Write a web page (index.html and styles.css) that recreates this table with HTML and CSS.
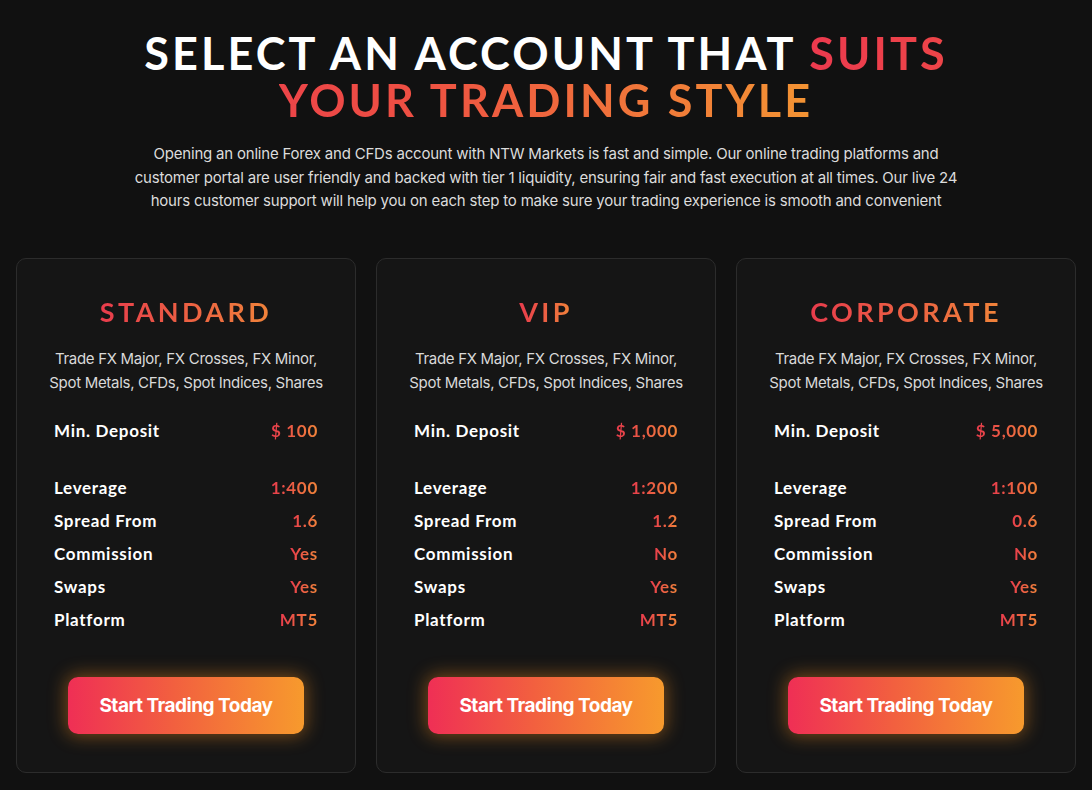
FILE: index.html
```html
<!DOCTYPE html>
<html lang="en">
<head>
<meta charset="utf-8">
<title>Select an account</title>
<link rel="stylesheet" href="styles.css">
</head>
<body>
<section class="accounts">
  <header class="intro">
    <h1 class="headline">SELECT AN ACCOUNT THAT <span class="accent">SUITS<br>YOUR TRADING STYLE</span></h1>
    <p class="lead">Opening an online Forex and CFDs account with NTW Markets is fast and simple. Our online trading platforms and customer portal are user friendly and backed with tier 1 liquidity, ensuring fair and fast execution at all times. Our live 24 hours customer support will help you on each step to make sure your trading experience is smooth and convenient</p>
  </header>
  <div class="cards">
    <article class="card">
      <h2 class="card-title"><span class="grad">STANDARD</span></h2>
      <p class="card-desc">Trade FX Major, FX Crosses, FX Minor,<br>Spot Metals, CFDs, Spot Indices, Shares</p>
      <dl class="specs">
        <div class="row first"><dt>Min. Deposit</dt><dd><span class="grad">$ 100</span></dd></div>
        <div class="row"><dt>Leverage</dt><dd><span class="grad">1:400</span></dd></div>
        <div class="row"><dt>Spread From</dt><dd><span class="grad">1.6</span></dd></div>
        <div class="row"><dt>Commission</dt><dd><span class="grad">Yes</span></dd></div>
        <div class="row"><dt>Swaps</dt><dd><span class="grad">Yes</span></dd></div>
        <div class="row"><dt>Platform</dt><dd><span class="grad">MT5</span></dd></div>
      </dl>
      <a class="btn" href="#">Start Trading Today</a>
    </article>
    <article class="card">
      <h2 class="card-title"><span class="grad">VIP</span></h2>
      <p class="card-desc">Trade FX Major, FX Crosses, FX Minor,<br>Spot Metals, CFDs, Spot Indices, Shares</p>
      <dl class="specs">
        <div class="row first"><dt>Min. Deposit</dt><dd><span class="grad">$ 1,000</span></dd></div>
        <div class="row"><dt>Leverage</dt><dd><span class="grad">1:200</span></dd></div>
        <div class="row"><dt>Spread From</dt><dd><span class="grad">1.2</span></dd></div>
        <div class="row"><dt>Commission</dt><dd><span class="grad">No</span></dd></div>
        <div class="row"><dt>Swaps</dt><dd><span class="grad">Yes</span></dd></div>
        <div class="row"><dt>Platform</dt><dd><span class="grad">MT5</span></dd></div>
      </dl>
      <a class="btn" href="#">Start Trading Today</a>
    </article>
    <article class="card">
      <h2 class="card-title"><span class="grad">CORPORATE</span></h2>
      <p class="card-desc">Trade FX Major, FX Crosses, FX Minor,<br>Spot Metals, CFDs, Spot Indices, Shares</p>
      <dl class="specs">
        <div class="row first"><dt>Min. Deposit</dt><dd><span class="grad">$ 5,000</span></dd></div>
        <div class="row"><dt>Leverage</dt><dd><span class="grad">1:100</span></dd></div>
        <div class="row"><dt>Spread From</dt><dd><span class="grad">0.6</span></dd></div>
        <div class="row"><dt>Commission</dt><dd><span class="grad">No</span></dd></div>
        <div class="row"><dt>Swaps</dt><dd><span class="grad">Yes</span></dd></div>
        <div class="row"><dt>Platform</dt><dd><span class="grad">MT5</span></dd></div>
      </dl>
      <a class="btn" href="#">Start Trading Today</a>
    </article>
  </div>
</section>
</body>
</html>
```
FILE: styles.css
```css
* { box-sizing: border-box; }
html, body { margin: 0; padding: 0; }
body {
  background: #111111;
  color: #ffffff;
  font-family: "Lato", "Liberation Sans", sans-serif;
  width: 1092px;
  height: 790px;
  overflow: hidden;
}
.accounts {
  padding: 30px 16px 0;
}
.intro {
  display: flex;
  flex-direction: column;
  align-items: center;
  text-align: center;
}
.headline {
  margin: 0;
  font-family: "Lato", sans-serif;
  font-weight: 700;
  font-size: 45px;
  line-height: 47px;
  letter-spacing: 3.1px;
  color: #ffffff;
}
.accent {
  background: linear-gradient(90deg, #ec3a4e 0%, #ee4f43 40%, #f39433 100%);
  -webkit-background-clip: text;
  background-clip: text;
  color: transparent;
}
.lead {
  margin: 18px 0 0;
  width: 830px;
  font-family: "Inter", sans-serif;
  font-size: 15px;
  line-height: 23.5px;
  letter-spacing: -0.2px;
  color: #dcdcdc;
}
.cards {
  margin-top: 45px;
  display: grid;
  grid-template-columns: repeat(3, 340px);
  gap: 20px;
}
.card {
  height: 515px;
  background: #151515;
  border: 1px solid #2c2c2c;
  border-radius: 10px;
  padding: 38px 0 0;
  display: flex;
  flex-direction: column;
  align-items: center;
}
.card-title {
  margin: 0;
  font-family: "Lato", sans-serif;
  font-weight: 700;
  font-size: 27px;
  line-height: 30px;
  letter-spacing: 3.4px;
}
.grad {
  background: linear-gradient(90deg, #e83c4c 0%, #f0843a 100%);
  -webkit-background-clip: text;
  background-clip: text;
  color: transparent;
}
.card-desc {
  margin: 20px 0 0;
  text-align: center;
  font-family: "Inter", sans-serif;
  font-size: 15px;
  line-height: 24px;
  letter-spacing: -0.3px;
  color: #d9d9d9;
}
.specs {
  margin: 19px 0 0;
  width: 100%;
  padding: 0 37px;
  display: flex;
  flex-direction: column;
}
.row {
  display: flex;
  justify-content: space-between;
  align-items: center;
  height: 33px;
}
.row.first {
  margin-bottom: 24px;
}
.row dt, .row dd {
  margin: 0;
  font-family: "Lato", sans-serif;
  font-weight: 700;
  font-size: 17px;
  letter-spacing: 0.7px;
}
.row dt { color: #ffffff; }
.btn {
  margin-top: 41px;
  width: 236px;
  height: 57px;
  border-radius: 10px;
  display: flex;
  align-items: center;
  justify-content: center;
  background: linear-gradient(90deg, #ef2f55 0%, #f2603f 45%, #f79a2d 100%);
  box-shadow: 0 0 18px 2px rgba(240, 140, 30, 0.45);
  color: #ffffff;
  text-decoration: none;
  font-family: "Inter", sans-serif;
  font-weight: 700;
  font-size: 19px;
  letter-spacing: -0.5px;
}
```
